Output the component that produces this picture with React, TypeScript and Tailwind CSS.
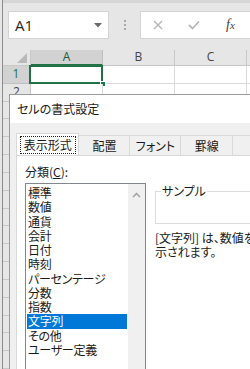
import React from 'react';

const jp = "font-['Meiryo_UI','Noto_Sans_CJK_JP',sans-serif] [font-feature-settings:'palt']";
const latin = "font-['Open_Sans','Liberation_Sans',sans-serif]";

const CATEGORIES = ['標準', '数値', '通貨', '会計', '日付', '時刻', 'パーセンテージ', '分数', '指数', '文字列', 'その他', 'ユーザー定義'];
const SELECTED = '文字列';
const TABS = [
  { label: '配置', w: 'w-[53px]' },
  { label: 'フォント', w: 'w-[53px]' },
  { label: '罫線', w: 'w-[54px]' },
  { label: '塗りつぶし', w: 'w-[110px]' },
];

const FormulaBar: React.FC = () => (
  <div className="h-[50px] bg-[#e6e6e6] border-t-[3px] border-[#d6d6d6] flex items-start pt-[8px]">
    <div className="ml-[5px] w-[101px] h-[28px] bg-white border border-[#d4d4d4] flex items-center justify-between pl-[6px] pr-[6px]">
      <span className={`${latin} text-[15px] text-[#262626] leading-none`}>A1</span>
      <svg width="8" height="5" viewBox="0 0 8 5"><path d="M0 0 L8 0 L4 4.5 Z" fill="#6a6a6a" /></svg>
    </div>
    <div className="w-[31px] h-[28px] flex flex-col items-center justify-center gap-[2px]">
      <span className="w-[2px] h-[2px] bg-[#a8a8a8]" />
      <span className="w-[2px] h-[2px] bg-[#a8a8a8]" />
      <span className="w-[2px] h-[2px] bg-[#a8a8a8]" />
    </div>
    <div className="flex-1 h-[28px] bg-white border border-[#d4d4d4] border-r-0 flex items-center">
      <div className="w-[34px] flex justify-center">
        <svg width="10" height="10" viewBox="0 0 10 10"><path d="M1 1 L9 9 M9 1 L1 9" stroke="#b8b8b8" strokeWidth="1.4" /></svg>
      </div>
      <div className="w-[37px] flex justify-center">
        <svg width="12" height="10" viewBox="0 0 12 10"><path d="M1 5 L4.5 8.5 L11 1.5" stroke="#b8b8b8" strokeWidth="1.8" fill="none" /></svg>
      </div>
      <div className="w-[37px] flex justify-center">
        <span className="font-['Liberation_Serif',serif] italic text-[14px] text-[#444] leading-none">
          f<span className="text-[11px]">x</span>
        </span>
      </div>
    </div>
  </div>
);

const ColumnHeaders: React.FC = () => (
  <div className="flex h-[16px]">
    <div className="w-[28px] h-full bg-[#e6e6e6] border-r border-b border-[#c8c8c8] relative">
      <svg className="absolute right-[3px] bottom-[2px]" width="10" height="10" viewBox="0 0 10 10"><path d="M10 0 L10 10 L0 10 Z" fill="#b9b9b9" /></svg>
    </div>
    <div className={`w-[72px] h-full bg-[#d2d2d2] border-r border-b-2 border-r-[#c0c0c0] border-b-[#217346] flex items-center justify-center ${latin} text-[12px] text-[#1d5b37]`}>A</div>
    <div className={`w-[72px] h-full bg-[#e6e6e6] border-r border-b border-[#c8c8c8] flex items-center justify-center ${latin} text-[12px] text-[#444]`}>B</div>
    <div className={`w-[72px] h-full bg-[#e6e6e6] border-r border-b border-[#c8c8c8] flex items-center justify-center ${latin} text-[12px] text-[#444]`}>C</div>
    <div className="flex-1 h-full bg-[#e6e6e6] border-b border-[#c8c8c8]" />
  </div>
);

// rows under the dialog only show their header strip, so no number is drawn there
const GridRow: React.FC<{ n: number }> = ({ n }) => {
  const active = n === 1;
  return (
    <div className="flex h-[18px]">
      <div
        className={`w-[28px] h-full border-r border-b flex items-center justify-center ${latin} text-[12px] ${
          active ? 'bg-[#d2d2d2] border-r-[#217346] border-r-2 border-b-[#c0c0c0] text-[#217346]' : 'bg-[#e6e6e6] border-[#c8c8c8] text-[#444]'
        }`}
      >
        {n <= 2 ? n : null}
      </div>
      <div className="w-[72px] h-full border-r border-b border-[#dadada] bg-white relative">
        {active && (
          <>
            <div className="absolute left-[-2px] top-[-1px] w-[74px] h-[19px] border-2 border-[#217346]" />
            <div className="absolute right-[-4px] bottom-[-4px] w-[6px] h-[6px] bg-[#217346] border border-white" />
          </>
        )}
      </div>
      <div className="w-[72px] h-full border-r border-b border-[#dadada] bg-white" />
      <div className="w-[72px] h-full border-r border-b border-[#dadada] bg-white" />
      <div className="flex-1 h-full border-b border-[#dadada] bg-white" />
    </div>
  );
};

const CategoryList: React.FC = () => (
  <div className="w-[121px] h-[200px] border border-[#828790] bg-white flex">
    <div className="flex-1 pt-[2px] pl-[1px] pr-[1px]">
      {CATEGORIES.map((c) => (
        <div
          key={c}
          className={`h-[14.27px] leading-[14.27px] pl-[1px] text-[12px] tracking-[-0.3px] whitespace-nowrap ${
            c === SELECTED ? 'bg-[#0078d7] text-white' : 'text-[#1a1a1a]'
          }`}
        >
          {c}
        </div>
      ))}
    </div>
    <div className="w-[17px] bg-[#f0f0f0] flex justify-center pt-[8px]">
      <svg width="9" height="6" viewBox="0 0 9 6"><path d="M1 5 L4.5 1.5 L8 5" stroke="#a0a0a0" strokeWidth="1.5" fill="none" /></svg>
    </div>
  </div>
);

const FormatDialog: React.FC = () => (
  <div className={`absolute left-[9px] top-[94px] w-[330px] h-[290px] border-l border-t border-[#9a9a9a] bg-[#f0f0f0] ${jp}`}>
    <div className="h-[28px] bg-white flex items-center pl-[7px] text-[12px] text-[#1a1a1a]">セルの書式設定</div>
    <div className="pt-[10px] pl-[6px]">
      <div className="flex items-end h-[22px]">
        <div className="w-[66px] h-[22px] bg-white border border-b-0 border-[#d9d9d9] flex items-center justify-center relative z-10">
          <span className="px-[3px] h-[18px] leading-[16px] border border-dotted border-[#222] text-[12px] text-[#1a1a1a]">表示形式</span>
        </div>
        {TABS.map((t) => (
          <div key={t.label} className={`${t.w} h-[20px] border border-l-0 border-b-0 border-[#d9d9d9] flex items-center justify-center text-[12px] text-[#1a1a1a] whitespace-nowrap`}>
            {t.label}
          </div>
        ))}
      </div>
      <div className="bg-white border-t border-l border-[#d9d9d9] h-[240px] pl-[8px] pt-[9px] flex gap-[9px]">
        <div className="flex flex-col">
          <div className="h-[14px] leading-[14px] text-[12px] text-[#1a1a1a] mb-[4px]">
            分類(<span className="underline">C</span>):
          </div>
          <CategoryList />
        </div>
        <div className="flex-1 pt-[26px]">
          <div className="relative h-[33px] border border-[#dcdcdc] border-r-0">
            <span className="absolute left-[5px] top-[-8px] px-[1px] bg-white text-[12px] leading-[14px] text-[#1a1a1a]">サンプル</span>
          </div>
          <div className="mt-[7px] text-[12px] leading-[14px] text-[#1a1a1a] whitespace-nowrap">
            <div>[文字列] は、数値を文字列として扱い、入力したとおりに表</div>
            <div>示されます。</div>
          </div>
        </div>
      </div>
    </div>
  </div>
);

export default function App() {
  return (
    <div className="relative w-[250px] h-[369px] overflow-hidden bg-[#e6e6e6] flex">
      <div className="w-[2px] bg-[#e6e6e6]" />
      <div className="w-[1px] bg-[#8c8c8c]" />
      <div className="flex-1 flex flex-col">
        <FormulaBar />
        <ColumnHeaders />
        {Array.from({ length: 17 }, (_, i) => (
          <GridRow key={i} n={i + 1} />
        ))}
      </div>
      <FormatDialog />
    </div>
  );
}
